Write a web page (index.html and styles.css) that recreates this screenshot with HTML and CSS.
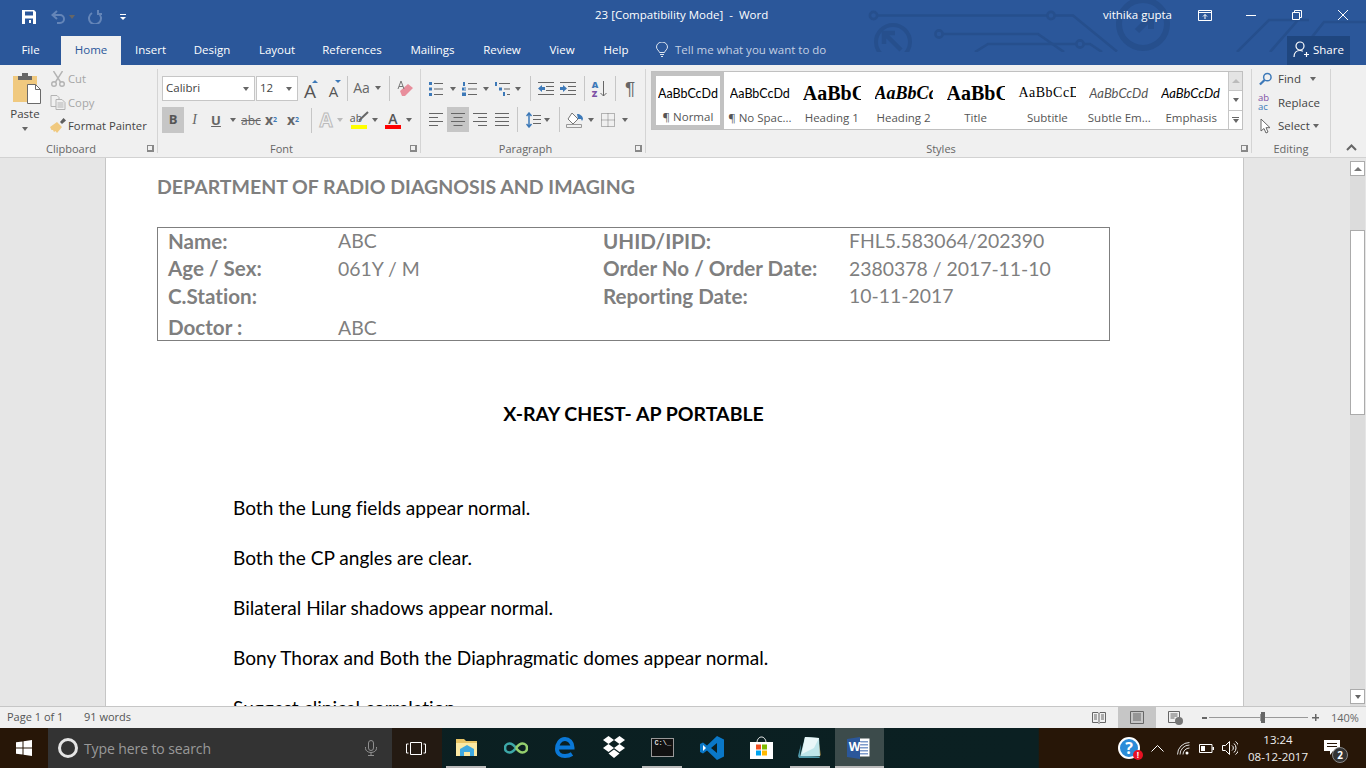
FILE: index.html
```html
<!DOCTYPE html>
<html lang="en">
<head>
<meta charset="utf-8">
<title>23 [Compatibility Mode] - Word</title>
<link rel="stylesheet" href="styles.css">
</head>
<body>
<div class="app">
  <header class="chrome">
    <svg class="circuit" width="506" height="52" viewBox="860 0 506 52" fill="none" stroke="#264f8d" stroke-width="2.6">
      <circle cx="873.5" cy="15.5" r="3.6"/><path d="M877 15.5h170"/><circle cx="1051" cy="15.5" r="3.6"/><path d="M1055 15.5h18l44 36"/>
      <circle cx="893" cy="42" r="17" stroke-width="4"/><path d="M885 34l16 16M884 44V33h11" stroke-width="4.5"/>
      <circle cx="939" cy="34" r="3.6"/><path d="M943 34h95l26 18"/>
      <path d="M975 52l13-8h88"/><circle cx="1080" cy="44" r="3.6"/><path d="M1084 44h6l12 8"/>
      <circle cx="1143" cy="24" r="24" stroke-width="6"/><path d="M1137 31l13-13M1137 15h14v14" stroke-width="6"/>
      <path d="M1237 52l32-32h40M1270 52l28-32M1300 52l24-30h42"/>
    </svg>
    <div class="titlebar">
      <div class="qat">
        <svg class="q-save" width="14" height="14" viewBox="0 0 14 14"><path fill="#fff" fill-rule="evenodd" d="M0 0h12l2 2v12H0zM3 1.5v4h8v-4zM3 8.5V14h8V8.5zM7 10h2v3H7z"/></svg>
        <svg class="q-undo" width="15" height="14" viewBox="0 0 15 14" fill="none" stroke="#6485b8" stroke-width="2"><path d="M6 1L1.5 5 6 9M2 5h7a4 4 0 0 1 0 8H6"/></svg>
        <i class="arr arr-title"></i>
        <svg class="q-redo" width="14" height="14" viewBox="0 0 14 14" fill="none" stroke="#6485b8" stroke-width="2"><path d="M4 3a6 6 0 1 0 6 0M10 0v4h4"/></svg>
        <span class="q-custom"><b></b><i class="arr arr-white"></i></span>
      </div>
      <div class="doc-title">23 [Compatibility Mode]&nbsp; -&nbsp; Word</div>
      <div class="user">vithika gupta</div>
      <div class="winbtn"><svg width="14" height="11" viewBox="0 0 14 11" fill="none" stroke="#fff"><path d="M.5.500h13v10H.5zM.5 2.500h13M7 9V4.500M5 6.500l2-2 2 2"/></svg></div>
      <div class="winbtn"><svg width="10" height="1" viewBox="0 0 10 1"><path fill="#fff" d="M0 0h10v1H0z"/></svg></div>
      <div class="winbtn"><svg width="10" height="10" viewBox="0 0 10 10" fill="none" stroke="#fff"><path d="M.5 2.500h7v7h-7zM2.500 2.500v-2h7v7h-2"/></svg></div>
      <div class="winbtn"><svg width="10" height="10" viewBox="0 0 10 10" fill="none" stroke="#fff"><path d="M0 0l10 10M10 0L0 10"/></svg></div>
    </div>
    <nav class="tabs">
      <span class="tab t61">File</span>
      <span class="tab t60 active">Home</span>
      <span class="tab t59">Insert</span>
      <span class="tab t64">Design</span>
      <span class="tab t66">Layout</span>
      <span class="tab t84">References</span>
      <span class="tab t77">Mailings</span>
      <span class="tab t62">Review</span>
      <span class="tab t58">View</span>
      <span class="tab t50">Help</span>
      <span class="tell">
        <svg width="12" height="15" viewBox="0 0 12 15" fill="none" stroke="#dfe6f0"><path d="M3.500 10.500C3 8.500 .5 7.500 .5 5a5.500 5 0 0 1 11 0c0 2.500-2.500 3.500-3 5.500zM4 12.500h4M5 14.500h2"/></svg>
        <span>Tell me what you want to do</span>
      </span>
      <span class="share">
        <svg width="16" height="17" viewBox="0 0 16 17" fill="none" stroke="#fff" stroke-width="1.200"><circle cx="7" cy="5" r="4"/><path d="M1 16c0-4 2.500-6.500 6-6.500 1 0 2 .2 2.800.7M11 13.500h5M13.500 11v5"/></svg>
        <span>Share</span>
      </span>
    </nav>
  </header>

  <section class="ribbon">
    <div class="group g-clip">
      <div class="clip-body">
        <div class="paste">
          <svg width="28" height="31" viewBox="0 0 28 31"><path fill="#f0c97f" d="M0 3h24v26H0z"/><path fill="#666" d="M5 3h14v4H5zM9 0h6v3H9z"/><path fill="#fff" stroke="#6a6a6a" d="M14.500 11.500h8l5 5v14h-13z"/><path fill="none" stroke="#6a6a6a" d="M22.500 11.500v5h5"/></svg>
          <span class="paste-label">Paste</span>
          <i class="arr"></i>
        </div>
        <div class="clip-list">
          <div class="clip-row muted">
            <svg width="15" height="16" viewBox="0 0 15 16" fill="none" stroke="#b3b3b3" stroke-width="1.400"><path d="M3 0l7 11M12 0L5 11"/><circle cx="3.500" cy="13" r="2.300"/><circle cx="11.500" cy="13" r="2.300"/></svg>
            <span>Cut</span>
          </div>
          <div class="clip-row muted">
            <svg width="15" height="15" viewBox="0 0 15 15" fill="#f0f0f0" stroke="#b3b3b3"><path d="M.5.500h6l2 2v9h-8z"/><path d="M5.500 4.500h6l3 3v7h-9zM7 8h6M7 10h6M7 12h6"/></svg>
            <span>Copy</span>
          </div>
          <div class="clip-row">
            <svg width="16" height="15" viewBox="0 0 16 15"><path fill="#5d5d5d" d="M10 4l3.500-4L16 2.500 12 6z"/><path fill="#f0c97f" d="M0 9l7-5 5 5-5 6-1.500-2L4 14l-1-2-1.500 0z"/></svg>
            <span>Format Painter</span>
          </div>
        </div>
      </div>
      <div class="g-label lab-launch">Clipboard<i class="launch"></i></div>
    </div>

    <div class="group g-font">
      <div class="rows">
        <div class="row font-r1">
          <span class="combo c-font"><span>Calibri</span><i class="arr"></i></span>
          <span class="combo c-size"><span>12</span><i class="arr"></i></span>
          <span class="cell big-a up">A<i class="tip tip-up"></i></span>
          <span class="cell big-a down">A<i class="tip tip-down"></i></span>
          <span class="cell"><i class="vsep"></i></span>
          <span class="cell aa"><span>Aa</span><i class="arr"></i></span>
          <span class="cell"><i class="vsep"></i></span>
          <span class="cell">
            <svg width="16" height="17" viewBox="0 0 16 17"><path fill="#e88e9c" d="M3 11l8-7 5 4-8 8H5z"/><path fill="none" stroke="#777" d="M1 9l3-8 3 8M2 6.500h4"/></svg>
          </span>
        </div>
        <div class="row font-r2">
          <span class="cell sel fmt-b">B</span>
          <span class="cell fmt-i">I</span>
          <span class="cell fmt-u">U</span>
          <span class="cell"><i class="arr"></i></span>
          <span class="cell fmt-s">abc</span>
          <span class="cell fmt-x">x<sub>2</sub></span>
          <span class="cell fmt-x">x<sup>2</sup></span>
          <span class="cell"><i class="vsep"></i></span>
          <span class="cell fmt-fx">A</span>
          <span class="cell"><i class="arr light"></i></span>
          <span></span>
          <span class="cell stack hl"><span class="ab">ab</span><svg class="pen" width="11" height="10" viewBox="0 0 11 10"><path fill="none" stroke="#666" stroke-width="2" d="M1 9.500L10 1"/></svg><i class="bar bar-y"></i></span>
          <span class="cell"><i class="arr"></i></span>
          <span class="cell stack"><span class="ca">A</span><i class="bar bar-r"></i></span>
          <span class="cell"><i class="arr"></i></span>
        </div>
      </div>
      <div class="g-label lab-launch">Font<i class="launch"></i></div>
    </div>

    <div class="group g-para">
      <div class="rows">
        <div class="row para-r1">
          <span class="cell"><svg width="14" height="14" viewBox="0 0 14 14"><path fill="#3d79b8" d="M0 0h3v3H0zM0 5.500h3v3H0zM0 11h3v3H0z"/><path fill="#666" d="M5 1h9v1H5zM5 6.500h9v1H5zM5 12h9v1H5z"/></svg></span>
          <span class="cell"><i class="arr"></i></span>
          <span class="cell"><svg width="15" height="14" viewBox="0 0 15 14"><path fill="#3d79b8" d="M1 0h2v4H1zM0 5.500h4v1H2v1h2v1H0zM0 10.500h4v3.500H0z"/><path fill="#666" d="M6 1h9v1H6zM6 6.500h9v1H6zM6 12h9v1H6z"/></svg></span>
          <span class="cell"><i class="arr"></i></span>
          <span class="cell"><svg width="16" height="14" viewBox="0 0 16 14"><path fill="#3d79b8" d="M1 0h2v4H1zM5 5.500h3v3H5zM9 10h2v4H9z"/><path fill="#666" d="M5 1h11v1H5zM10 6.500h6v1h-6zM13 12h3v1h-3z"/></svg></span>
          <span class="cell"><i class="arr"></i></span>
          <span class="cell"><i class="vsep"></i></span>
          <span class="cell"><svg width="16" height="13" viewBox="0 0 16 13"><path fill="#666" d="M0 0h16v1H0zM8 4h8v1H8zM8 8h8v1H8zM0 12h16v1H0z"/><path fill="#3d79b8" d="M0 6.500L4 3v2h3v3H4v2z"/></svg></span>
          <span></span>
          <span class="cell"><svg width="16" height="13" viewBox="0 0 16 13"><path fill="#666" d="M0 0h16v1H0zM8 4h8v1H8zM8 8h8v1H8zM0 12h16v1H0z"/><path fill="#3d79b8" d="M7 6.500L3 3v2H0v3h3v2z"/></svg></span>
          <span class="cell"><i class="vsep"></i></span>
          <span class="cell sort"><span class="sort-az"><b>A</b><b>Z</b></span><svg width="7" height="16" viewBox="0 0 7 16" fill="none" stroke="#666"><path d="M3.500 0v15M.5 12l3 3 3-3"/></svg></span>
          <span class="cell"><i class="vsep"></i></span>
          <span class="cell pil">¶</span>
        </div>
        <div class="row para-r2">
          <span class="cell"><svg width="14" height="13" viewBox="0 0 14 13"><path fill="#666" d="M0 0h14v1H0zM0 4h9v1H0zM0 8h14v1H0zM0 12h9v1H0z"/></svg></span>
          <span class="cell sel"><svg width="14" height="13" viewBox="0 0 14 13"><path fill="#666" d="M0 0h14v1H0zM2.500 4h9v1h-9zM0 8h14v1H0zM2.500 12h9v1h-9z"/></svg></span>
          <span class="cell"><svg width="14" height="13" viewBox="0 0 14 13"><path fill="#666" d="M0 0h14v1H0zM5 4h9v1H5zM0 8h14v1H0zM5 12h9v1H5z"/></svg></span>
          <span class="cell"><svg width="14" height="13" viewBox="0 0 14 13"><path fill="#666" d="M0 0h14v1H0zM0 4h14v1H0zM0 8h14v1H0zM0 12h14v1H0z"/></svg></span>
          <span class="cell"><i class="vsep"></i></span>
          <span class="cell"><svg class="shift" width="15" height="16" viewBox="0 0 15 16"><path fill="none" stroke="#3d79b8" stroke-width="1.500" d="M3 1v14M.5 4L3 1l2.500 3M.5 12L3 15l2.500-3"/><path fill="#666" d="M7 3h8v1H7zM7 7h8v1H7zM7 11h8v1H7z"/></svg></span>
          <span class="cell"><i class="arr"></i></span>
          <span class="cell"><i class="vsep"></i></span>
          <span class="cell"><svg width="18" height="16" viewBox="0 0 18 16"><path fill="#fff" stroke="#777" d="M6 1l6 6-5 5-5-5z"/><path fill="#3d79b8" d="M11 2c3 0 6 2 6 5l-1 2-1-2-3 0z"/><path fill="#f0f0f0" stroke="#999" d="M.5 12.500h15v3H.5z"/></svg></span>
          <span class="cell"><i class="arr"></i></span>
          <span class="cell"><svg width="14" height="14" viewBox="0 0 14 14" fill="none" stroke="#777" stroke-dasharray="1 1"><path d="M.5.500h13v13H.5zM7 .5v13M.5 7h13"/></svg></span>
          <span class="cell"><i class="arr"></i></span>
        </div>
      </div>
      <div class="g-label lab-launch">Paragraph<i class="launch"></i></div>
    </div>

    <div class="group g-styles">
      <div class="gallery">
        <div class="style-list">
          <div class="style current"><span class="pv pv-cal">AaBbCcDd</span><span class="st-name">¶ Normal</span></div>
          <div class="style"><span class="pv pv-cal">AaBbCcDd</span><span class="st-name">¶ No Spac...</span></div>
          <div class="style"><span class="pv pv-h1">AaBbCc</span><span class="st-name">Heading 1</span></div>
          <div class="style"><span class="pv pv-h2">AaBbCcD</span><span class="st-name">Heading 2</span></div>
          <div class="style"><span class="pv pv-h1">AaBbCc</span><span class="st-name">Title</span></div>
          <div class="style"><span class="pv pv-sub">AaBbCcDd</span><span class="st-name">Subtitle</span></div>
          <div class="style"><span class="pv pv-em gray">AaBbCcDd</span><span class="st-name">Subtle Em...</span></div>
          <div class="style"><span class="pv pv-em">AaBbCcDd</span><span class="st-name">Emphasis</span></div>
        </div>
        <div class="gal-scroll">
          <span class="gs gs-up"><i class="tri-up"></i></span>
          <span class="gs"><i class="arr"></i></span>
          <span class="gs gs-more"><b></b><i class="arr"></i></span>
        </div>
      </div>
      <div class="g-label lab-launch">Styles<i class="launch"></i></div>
    </div>

    <div class="group g-edit">
      <div class="edit-list">
        <div class="edit-row">
          <svg width="14" height="14" viewBox="0 0 14 14" fill="none" stroke="#3d79b8" stroke-width="1.600"><circle cx="9" cy="5" r="4"/><path d="M6 8l-5 5" stroke-width="2.400"/></svg>
          <span>Find</span><i class="arr arr-find"></i>
        </div>
        <div class="edit-row">
          <span class="abac"><b>ab</b><b>ac</b></span>
          <span>Replace</span>
        </div>
        <div class="edit-row">
          <svg width="12" height="16" viewBox="0 0 12 16" fill="#fff" stroke="#666"><path d="M1.500 1v12l3-2.500 2 4.500 2-1-2-4.300h4z"/></svg>
          <span>Select</span><i class="arr arr-select"></i>
        </div>
      </div>
      <div class="g-label">Editing</div>
    </div>
    <div class="collapse"><svg width="11" height="7" viewBox="0 0 11 7" fill="none" stroke="#666" stroke-width="2"><path d="M1 6l4.500-4.500L10 6"/></svg></div>
  </section>

  <main class="docarea">
    <article class="page">
      <h1 class="dept">DEPARTMENT OF RADIO DIAGNOSIS AND IMAGING</h1>
      <div class="info">
        <b>Name:</b><span>ABC</span><b>UHID/IPID:</b><span>FHL5.583064/202390</span>
        <b>Age / Sex:</b><span>061Y / M</span><b>Order No / Order Date:</b><span>2380378 / 2017-11-10</span>
        <b>C.Station:</b><span></span><b>Reporting Date:</b><span>10-11-2017</span>
        <b class="last">Doctor :</b><span class="last">ABC</span><span></span><span></span>
      </div>
      <h2 class="report-title">X-RAY CHEST- AP PORTABLE</h2>
      <div class="findings">
        <p>Both the Lung fields appear normal.</p>
        <p>Both the CP angles are clear.</p>
        <p>Bilateral Hilar shadows appear normal.</p>
        <p>Bony Thorax and Both the Diaphragmatic domes appear normal.</p>
        <p>Suggest clinical correlation.</p>
      </div>
    </article>
    <aside class="vscroll">
      <span class="sb-btn"><i class="tri-up"></i></span>
      <span class="sb-thumb"></span>
      <span class="sb-btn sb-down"><i class="arr"></i></span>
    </aside>
  </main>

  <footer class="status">
    <span class="st-page">Page 1 of 1</span>
    <span class="st-words">91 words</span>
    <span class="st-right">
      <span class="view"><svg width="14" height="13" viewBox="0 0 14 13" fill="none" stroke="#666"><path d="M.5 1.500h5.500l1 1 1-1h5.500v10H8l-1 1-1-1H.5zM7 2.500v9M2 4h3M2 6h3M2 8h3M9 4h3M9 6h3M9 8h3"/></svg></span>
      <span class="view on"><svg width="14" height="13" viewBox="0 0 14 13" fill="none" stroke="#666"><path d="M.5.500h13v12H.5zM3 3h8M3 5h8M3 7h8M3 9h8"/></svg></span>
      <span class="view"><svg width="15" height="14" viewBox="0 0 15 14"><path fill="none" stroke="#666" d="M.5.500h11v11H.5zM2.500 3h7M2.500 5h7M2.500 7h4"/><circle cx="11" cy="10" r="4" fill="#777"/></svg></span>
      <span class="zoom-ctl">
        <i class="z-minus"></i>
        <span class="z-track"><i class="z-mid"></i><i class="z-thumb"></i></span>
        <i class="z-plus"></i>
      </span>
      <span class="z-val">140%</span>
    </span>
  </footer>

  <footer class="taskbar">
    <span class="start"><svg width="16" height="16" viewBox="0 0 16 16" fill="#fff"><path d="M0 2.300L6.500 1.400v6.100H0zM7.500 1.300L16 0v7.500H7.500zM0 8.500h6.500v6.100L0 13.700zM7.500 8.500H16V16l-8.500-1.300z"/></svg></span>
    <span class="search">
      <i class="cortana"></i>
      <span class="s-text">Type here to search</span>
      <svg class="mic" width="12" height="16" viewBox="0 0 12 16" fill="none" stroke="#8f8f8f"><rect x="3.500" y=".5" width="5" height="10" rx="2.500"/><path d="M.5 7v1.500a5.500 4 0 0 0 11 0V7M6 12.500V15M3 15.500h6"/></svg>
    </span>
    <span class="taskview"><svg width="20" height="13" viewBox="0 0 20 13" fill="none" stroke="#fff"><path d="M4.500.5h11v12h-11zM2.500 2H.5v9h2M17.500 2h2v9h-2"/></svg></span>
    <span class="app-cell open">
      <svg width="22" height="19" viewBox="0 0 22 19"><path fill="#e8c465" d="M0 1h8l2 2h11v15H0z"/><path fill="#fbe9a4" d="M0 5h21v13H0z"/><path fill="#3fa9e0" d="M4 18v-7l7-4 7 4v7h-4v-4H8v4z"/></svg>
    </span>
    <span class="app-cell">
      <svg width="24" height="12" viewBox="0 0 24 12" fill="none" stroke-width="2.600"><path stroke="#3da8a8" d="M12 6C9 2 7 1.500 5.500 1.500a4.500 4.500 0 0 0 0 9C7 10.500 9 10 12 6"/><path stroke="#95cf6e" d="M12 6c3-4 5-4.500 6.500-4.500a4.500 4.500 0 0 1 0 9C17 10.500 15 10 12 6"/></svg>
    </span>
    <span class="app-cell">
      <svg width="20" height="21" viewBox="0 0 20 21" fill="none" stroke="#0a78d7" stroke-width="4"><path d="M3 10.500h14.500C17.500 5.500 14 2 10 2 5 2 2 7 2 12c0 5 4 7 8 7 3 0 5-.6 7-2"/></svg>
    </span>
    <span class="app-cell">
      <svg width="24" height="23" viewBox="0 0 24 23" fill="#fff"><path d="M6.500 0L12 4 6.500 8 1 4zM17.500 0L23 4l-5.500 4L12 4zM6.500 8L12 12l-5.500 4L1 12zM17.500 8L23 12l-5.500 4L12 12zM6.500 17.500L12 13.500l5.500 4L12 22z"/></svg>
    </span>
    <span class="app-cell open">
      <span class="cmd">C:\_</span>
    </span>
    <span class="app-cell">
      <svg width="24" height="24" viewBox="0 0 24 24"><path fill="#0a78c8" d="M17 0l7 3.500v17L17 24 7 14.500 3 17.500 0 16V8l3-1.500 4 3L17 0zM17 7l-6 5 6 5z"/><path fill="#fff" d="M3 9v6l3-3z"/></svg>
    </span>
    <span class="app-cell">
      <svg width="23" height="23" viewBox="0 0 23 23"><path fill="none" stroke="#fff" d="M7 7c0-8 9-8 9 0"/><path fill="#fff" d="M0 6h23v17H0z"/><path fill="#f25022" d="M6 8.500h5v5H6z"/><path fill="#7fba00" d="M12 8.500h5v5h-5z"/><path fill="#00a4ef" d="M6 14.500h5v5H6z"/><path fill="#ffb900" d="M12 14.500h5v5h-5z"/></svg>
    </span>
    <span class="app-cell open">
      <svg width="24" height="22" viewBox="0 0 24 22"><path fill="#7d6c3c" d="M20 1l3 17-2 2z"/><path fill="#bfe6ea" d="M7 0l14 1 1 18-20 1z"/><path fill="#e9f7f8" d="M7 0l14 1-5 10-12 6z"/><path fill="#4f97a8" d="M0 19l3-12-1 12 19 .5L22 21 1 21z"/></svg>
    </span>
    <span class="app-cell active open">
      <svg width="24" height="22" viewBox="0 0 24 22"><path fill="#fff" d="M9 1.500h13.500v18H9z"/><path fill="#7f9ccb" d="M12 4h9v1.500h-9zM12 7h9v1.500h-9zM12 10h9v1.500h-9zM12 13h9v1.500h-9zM12 16h9v1.500h-9z"/><path fill="#2b579a" d="M0 2l13-2v22L0 20z"/></svg>
      <span class="w-mark">W</span>
    </span>
    <span class="tray">
      <span class="help">?<i class="help-badge">!</i></span>
      <svg class="t-chev" width="13" height="8" viewBox="0 0 13 8" fill="none" stroke="#fff"><path d="M.5 7.500l6-6 6 6"/></svg>
      <svg class="t-wifi" width="13" height="13" viewBox="0 0 13 13" fill="none" stroke="#ddd"><path d="M.5 12.500a12 12 0 0 1 12-12M3 12.500a9.500 9.500 0 0 1 9.500-9.500M6 12.500A6.500 6.500 0 0 1 12.500 6"/><circle cx="10" cy="11" r="1.500" fill="#fff" stroke="none"/></svg>
      <svg class="t-batt" width="15" height="9" viewBox="0 0 15 9"><path fill="none" stroke="#fff" d="M.5.500h12.500v8H.5z"/><path fill="#fff" d="M2 2h4v5H2zM13.500 3H15v3h-1.500z"/></svg>
      <svg class="t-spk" width="16" height="14" viewBox="0 0 16 14" fill="none" stroke="#fff"><path d="M.5 4.500h3L7.500.5v13l-4-4h-3zM10 4.500a3 3 0 0 1 0 5M12 2.500a6 6 0 0 1 0 9M13.500.5a8 8 0 0 1 0 13"/></svg>
      <span class="clock"><span>13:24</span><span>08-12-2017</span></span>
      <span class="notif">
        <svg width="16" height="15" viewBox="0 0 16 15" fill="#fff"><path fill-rule="evenodd" d="M0 0h16v11h-7l-3 4v-4H0zM3 3v1h10V3zM3 6v1h10V6z"/></svg>
        <i class="notif-badge">2</i>
      </span>
    </span>
  </footer>
</div>
</body>
</html>
```

FILE: styles.css
```css
* { box-sizing: border-box; }
html, body { margin: 0; padding: 0; height: 100%; overflow: hidden; }
body { font-family: "Open Sans", "Noto Sans", sans-serif; font-size: 12px; color: #444; background: #f0f0f0; }
i { font-style: normal; display: block; }
svg { display: block; flex: none; }
.app { width: 1366px; height: 768px; display: flex; flex-direction: column; overflow: hidden; }

/* title + tabs */
.chrome { position: relative; height: 65px; flex: none; background: #2b579a; color: #fff; font-size: 11.5px; }
.circuit { position: absolute; left: 860px; top: 0; }
.titlebar { position: relative; height: 36px; display: flex; align-items: flex-start; }
.qat { width: 595px; height: 33px; display: flex; align-items: center; }
.q-save { margin-left: 22px; }
.q-undo { margin-left: 15px; }
.arr-title { margin-left: 3px; border-top-color: #6485b8; }
.q-redo { margin-left: 13px; }
.q-custom { margin-left: 18px; display: flex; flex-direction: column; gap: 2px; align-items: center; }
.q-custom b { display: block; width: 6px; height: 1px; background: #fff; }
.doc-title { white-space: nowrap; line-height: 30px; }
.user { margin-left: auto; margin-right: 10px; line-height: 30px; }
.winbtn { width: 46px; height: 30px; display: flex; align-items: center; justify-content: center; }
.tabs { position: relative; height: 29px; display: flex; align-items: stretch; }
.tab { display: flex; align-items: center; justify-content: center; color: #fff; padding-bottom: 2px; }
.tab.active { background: #f0f0f0; color: #2b579a; }
.t61 { width: 61px; } .t60 { width: 60px; } .t59 { width: 59px; } .t64 { width: 64px; } .t66 { width: 66px; }
.t84 { width: 84px; } .t77 { width: 77px; } .t62 { width: 62px; } .t58 { width: 58px; } .t50 { width: 50px; }
.tell { margin-left: 15px; display: flex; align-items: center; gap: 7px; color: #c4d0e3; padding-bottom: 2px; }
.share { margin-left: auto; margin-right: 16px; width: 63px; background: #1f467f; display: flex; align-items: center; gap: 4px; padding: 0 0 2px 6px; }

/* ribbon */
.ribbon { position: relative; height: 93px; flex: none; display: flex; background: #f0f0f0; border-bottom: 1px solid #d2d2d2; padding-top: 4px; }
.group { position: relative; height: 84px; border-right: 1px solid #d4d4d4; flex: none; display: flex; flex-direction: column; }
.g-clip { width: 158px; } .g-font { width: 263px; } .g-para { width: 225px; } .g-styles { width: 606px; } .g-edit { width: 79px; }
.g-label { position: absolute; left: 0; right: 0; bottom: -3px; height: 15px; line-height: 15px; text-align: center; font-size: 11px; color: #666; }
.lab-launch { padding-right: 15px; }
.launch { position: absolute; right: 3px; bottom: 4px; width: 7px; height: 7px; border-left: 1px solid #888; border-top: 1px solid #888; border-right: 2px solid #888; border-bottom: 2px solid #888; }
.arr { width: 0; height: 0; border-left: 3.5px solid transparent; border-right: 3.5px solid transparent; border-top: 4px solid #666; flex: none; }
.arr.light { border-top-color: #bbb; }
.arr-white { border-top-color: #fff; border-left-width: 3px; border-right-width: 3px; border-top-width: 3px; }
.vsep { width: 1px; height: 25px; background: #c6c6c6; }
.cell { display: flex; align-items: center; justify-content: center; min-width: 0; color: #666; }
.sel { background: #c6c6c6; }
.shift { margin-left: 4px; }

.clip-body { display: flex; }
.paste { width: 50px; display: flex; flex-direction: column; align-items: center; padding: 4px 0 0 4px; }
.paste-label { margin-top: 2px; color: #444; line-height: 15px; margin-left: -4px; font-size: 11.5px; }
.paste .arr { margin-top: 6px; margin-left: -4px; }
.clip-list { margin-top: -2px; }
.clip-row { height: 23.5px; display: flex; align-items: center; width: 106px; color: #444; white-space: nowrap; }
.clip-row svg { width: 16px; }
.clip-row span { margin-left: 2px; font-size: 11.300px; }
.muted { color: #a6a6a6; }

.rows { padding: 7px 0 0 4px; display: flex; flex-direction: column; gap: 9px; }
.row { display: grid; align-items: stretch; }
.font-r1 { height: 22px; grid-template-columns: 93px 43px 24px 23px 4px 36px 8px 24px; }
.font-r2 { height: 23px; grid-template-columns: 22px 21px 22px 12px 24px 16px 28px 8px 22px 6px 6px 20px 12px 24px 8px; }
.combo { background: #fff; border: 1px solid #c6c6c6; display: flex; align-items: center; justify-content: space-between; padding: 0 5px 2px 3px; color: #444; font-size: 11.500px; }
.combo .arr { margin-top: 2px; }
.c-size { margin-left: 1px; }
.big-a { position: relative; font-size: 19px; line-height: 20px; align-items: flex-end; color: #555; }
.big-a.down { font-size: 15px; }
.tip { position: absolute; top: 4px; right: 4px; width: 0; height: 0; border-left: 3px solid transparent; border-right: 3px solid transparent; }
.tip-up { border-bottom: 3px solid #3d79b8; }
.tip-down { border-top: 3px solid #3d79b8; }
.aa { gap: 5px; font-size: 14px; padding-bottom: 2px; }
.fmt-b { font-weight: 700; font-size: 13px; color: #555; padding-bottom: 2px; }
.fmt-i { font-style: italic; font-family: "Liberation Serif", serif; font-size: 14px; color: #666; }
.fmt-u { text-decoration: underline; font-weight: 700; font-size: 13px; color: #666; }
.fmt-s { text-decoration: line-through; font-size: 12px; color: #666; }
.fmt-x { font-weight: 700; font-size: 14px; color: #666; line-height: 1; }
.fmt-x sub, .fmt-x sup { font-size: 7px; color: #3d79b8; line-height: 0; }
.fmt-fx { font-size: 19px; color: #f0f0f0; font-weight: 700; -webkit-text-stroke: 1px #bbb; }
.stack { flex-direction: column; justify-content: flex-end; padding-bottom: 4px; line-height: 1; }
.hl { position: relative; }
.pen { position: absolute; left: 9px; top: 4px; }
.ab { font-size: 10.500px; color: #555; margin: 0 6px 2px 0; }
.ca { font-size: 14px; font-weight: 600; color: #555; line-height: 13px; }
.bar { width: 16px; height: 4px; }
.bar-y { background: #ffff00; }
.bar-r { background: #ff0000; }

.para-r1 { height: 22px; grid-template-columns: 22px 12px 21px 12px 20px 12px 13px 18px 2px 22px 10px 21px 10px 20px; }
.para-r2 { height: 23px; grid-template-columns: 22px 22px 22px 22px 8px 20px 12px 12px 20px 12px 22px 12px; }
.sort { gap: 2px; }
.sort-az { display: flex; flex-direction: column; font-size: 9px; line-height: 9px; font-weight: 700; }
.sort-az b:first-child { color: #3d79b8; }
.sort-az b:last-child { color: #7d4fa5; }
.pil { font-size: 19px; color: #666; font-family: "Liberation Sans", sans-serif; }

.gallery { margin: 2px 0 0 5px; width: 592px; height: 59px; display: flex; background: #fff; border: 1px solid #c0c0c0; }
.style-list { display: flex; flex: 1; }
.style { width: 71.900px; display: flex; flex-direction: column; align-items: center; }
.style.current { border: 4px solid #c2c2c2; }
.pv { height: 30px; width: 60px; margin-top: 6px; overflow: hidden; white-space: nowrap; color: #000; display: flex; align-items: center; }
.current .pv { margin-top: 2px; }
.pv-cal { font-family: "Lato", sans-serif; font-size: 12.500px; }
.pv-h1 { font-family: "Liberation Serif", serif; font-weight: 700; font-size: 20px; width: 58px; }
.pv-h2 { font-family: "Liberation Serif", serif; font-weight: 700; font-style: italic; font-size: 18px; width: 58px; }
.pv-sub { font-family: "Liberation Serif", serif; font-size: 14px; letter-spacing: .5px; width: 58px; }
.pv-em { font-family: "Lato", sans-serif; font-style: italic; font-size: 13px; }
.gray { color: #555; }
.st-name { font-size: 11.500px; color: #555; white-space: nowrap; line-height: 16px; margin-top: 2px; }
.current .st-name { line-height: 14px; }
.gal-scroll { width: 14px; display: flex; flex-direction: column; border-left: 1px solid #c6c6c6; }
.gs { flex: 1; display: flex; flex-direction: column; gap: 1px; align-items: center; justify-content: center; border-bottom: 1px solid #c6c6c6; }
.gs:last-child { border-bottom: 0; }
.gs-up { background: #e4e4e4; }
.gs-more b { display: block; width: 7px; height: 1px; background: #666; }
.tri-up { width: 0; height: 0; border-left: 4px solid transparent; border-right: 4px solid transparent; border-bottom: 4px solid #777; }
.gs-up .tri-up { border-bottom-color: #bbb; }

.edit-list { padding: 0 0 0 7px; margin-top: -2px; }
.edit-row { height: 23.500px; display: flex; align-items: center; gap: 6px; color: #444; white-space: nowrap; font-size: 11.500px; }
.edit-row svg { width: 13px; }
.arr-find { margin-left: 3px; }
.arr-select { margin-left: -3px; }
.abac { width: 13px; display: flex; flex-direction: column; line-height: 9px; font-size: 9.500px; margin-left: -1px; margin-right: 1px; }
.abac b:first-child { font-weight: 400; color: #7d4fa5; }
.abac b:last-child { font-weight: 400; color: #3d79b8; }
.collapse { padding: 75px 0 0 15px; }

/* document */
.docarea { flex: 1; min-height: 0; display: flex; background: #e6e6e6; overflow: hidden; }
.page { margin-left: 105px; width: 1139px; background: #fff; border-left: 1px solid #c6c6c6; border-right: 1px solid #c6c6c6; font-family: "Lato", "Carlito", sans-serif; font-variant-ligatures: none; overflow: hidden; flex: none; }
.dept { margin: 18px 0 0 51px; font-size: 19.500px; line-height: 22px; font-weight: 700; color: #7f7f7f; white-space: nowrap; }
.info { margin: 29px 0 0 51px; width: 953px; height: 114px; border: 1px solid #7f7f7f; display: grid; grid-template-columns: 170px 265px 246px 1fr; grid-template-rows: 27px 28px 27px 30px; padding-left: 10px; align-items: center; color: #7f7f7f; font-size: 19.400px; white-space: nowrap; }
.info > * { padding-bottom: 2px; }
.info b { font-weight: 700; font-size: 20.600px; }
.info .last { padding: 4px 0 0; }
.report-title { margin: 61px 0 0 51px; width: 953px; text-align: center; font-size: 19.500px; line-height: 24px; font-weight: 700; color: #000; }
.findings { margin: 70px 0 0 127px; }
.findings p { margin: 0; height: 50px; line-height: 24px; font-size: 19.100px; color: #000; white-space: nowrap; }
.vscroll { margin-left: 106px; width: 15px; background: #dcdcdc; position: relative; flex: none; margin-top: 3px; }
.sb-btn { position: absolute; left: 0; top: 0; width: 15px; height: 15px; background: #fff; border: 1px solid #ababab; display: flex; align-items: center; justify-content: center; }
.sb-down { top: auto; bottom: 2px; }
.sb-thumb { position: absolute; left: 0; top: 69px; width: 15px; height: 185px; background: #fff; border: 1px solid #ababab; }

/* status */
.status { height: 22px; flex: none; background: #f0f0f0; border-top: 1px solid #c6c6c6; display: flex; align-items: center; color: #555; font-size: 11px; position: relative; }
.st-page { margin-left: 7px; width: 77px; padding-bottom: 2px; }
.st-words { padding-bottom: 2px; }
.st-right { margin-left: auto; display: flex; align-items: center; height: 100%; }
.view { width: 38px; height: 100%; display: flex; align-items: center; justify-content: center; }
.view.on { background: #c6c6c6; }
.zoom-ctl { margin-left: 8px; display: flex; align-items: center; }
.z-minus { width: 5px; height: 2px; background: #666; }
.z-track { position: relative; width: 99px; height: 1px; background: #999; margin: 0 4px 0 2px; }
.z-mid { position: absolute; left: 51px; top: -3px; width: 1px; height: 7px; background: #999; }
.z-thumb { position: absolute; left: 52px; top: -5px; width: 4px; height: 11px; background: #666; }
.z-plus { width: 7px; height: 7px; background: linear-gradient(#666,#666) center/7px 1.500px no-repeat, linear-gradient(#666,#666) center/1.500px 7px no-repeat; }
.z-val { margin: 0 6px 0 12px; color: #666; width: 29px; }

/* taskbar */
.taskbar { height: 40px; flex: none; display: flex; align-items: center; background: linear-gradient(90deg, #0b1f21 0, #0b2022 76%, #271607 76.1%, #271607 100%); color: #fff; }
.start { width: 48px; height: 100%; background: #271607; display: flex; align-items: center; justify-content: center; }
.search { width: 344px; height: 100%; background: #333; display: flex; align-items: center; padding-left: 10px; }
.cortana { width: 20px; height: 20px; border-radius: 50%; border: 3px solid #e4e4e4; flex: none; }
.s-text { margin-left: 6px; color: #999; font-size: 14px; letter-spacing: -.1px; white-space: nowrap; }
.mic { margin-left: auto; margin-right: 15px; }
.taskview { width: 50px; height: 100%; background: #241a12; display: flex; align-items: center; justify-content: center; padding-right: 2px; }
.app-cell { position: relative; width: 49.100px; height: 100%; display: flex; align-items: center; justify-content: center; padding-bottom: 1px; flex: none; }
.app-cell.open::after { content: ""; position: absolute; left: 4px; right: 5px; bottom: 0; height: 2px; background: #bbb; }
.app-cell.active { background: #3c4b4b; }
.app-cell.active::after { left: 0; right: 0; }
.cmd { width: 23px; height: 19px; background: #111; border: 1px solid #999; color: #ddd; font: 700 7px/9px "Liberation Mono", monospace; padding-left: 2px; }
.w-mark { position: absolute; left: 14px; top: 12px; font: 700 12px/14px "Open Sans", sans-serif; color: #fff; }
.tray { margin-left: auto; height: 100%; display: flex; align-items: center; position: relative; }
.t-chev { margin-left: 11px; }
.t-wifi { margin-left: 13px; }
.t-batt { margin-left: 9px; }
.t-spk { margin-left: 8px; }
.help { position: relative; width: 22px; height: 22px; border-radius: 50%; background: #2b8cd8; border: 2px solid #fff; color: #fff; font: 700 16px/18px "Open Sans", sans-serif; text-align: center; }
.help-badge { position: absolute; right: -5px; bottom: -3px; width: 10px; height: 10px; border-radius: 50%; background: #e81123; font: 700 8px/10px "Open Sans", sans-serif; }
.clock { width: 80px; display: flex; flex-direction: column; align-items: center; font-size: 11.500px; line-height: 17px; color: #eee; }
.notif { position: relative; width: 48px; height: 100%; display: flex; justify-content: center; padding: 12px 20px 0 0; }
.notif-badge { position: absolute; left: 14px; bottom: 5px; width: 16px; height: 16px; border-radius: 50%; background: #333; border: 1px solid #888; color: #fff; font: 700 10px/14px "Open Sans", sans-serif; text-align: center; }
```
